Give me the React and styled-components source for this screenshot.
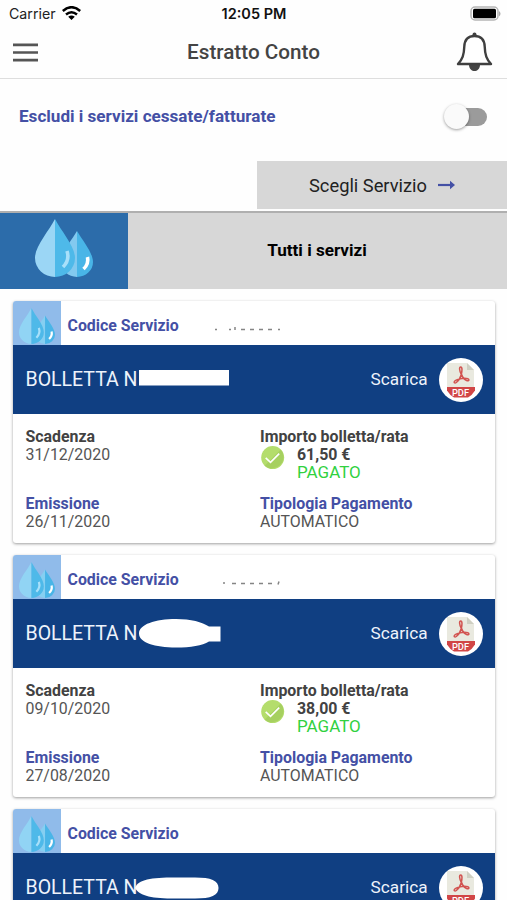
import React from "react";
import styled, { createGlobalStyle } from "styled-components";

const Global = createGlobalStyle`
  *{box-sizing:border-box}
  body{margin:0;background:#fff;overflow:hidden;font-family:Roboto,"Liberation Sans",sans-serif;color:#424242}
  svg{display:block;flex:none}
`;
const Screen = styled.div`width:507px;height:900px;overflow:hidden;background:#fefefe;`;
const StatusBar = styled.div`
  height:28px;display:grid;grid-template-columns:1fr auto 1fr;align-items:center;
  padding:0 6px 0 9px;font-family:Inter,sans-serif;font-size:14.2px;color:#222;
`;
const Carrier = styled.div`display:flex;align-items:center;gap:6px;padding-bottom:1px;`;
const Clock = styled.div`font-weight:600;font-size:14.500px;color:#111;margin-left:-2px;padding-bottom:1px;`;
const Battery = styled.div`justify-self:end;padding-bottom:1px;`;
const NavBar = styled.header`
  height:51px;display:grid;grid-template-columns:45px 1fr 45px;align-items:center;
  padding:0 10px 0 13px;border-bottom:1px solid #dedede;
`;
const Title = styled.h1`
  margin:-3px 3px 0 0;text-align:center;font-size:20.700px;font-weight:500;color:#444;
`;
const BellBox = styled.div`justify-self:end;margin:-3px 4px 0 0;`;
const FilterRow = styled.div`
  height:82px;display:flex;justify-content:space-between;align-items:flex-start;padding:27px 18px 0 19px;
`;
const FilterLabel = styled.div`
  font-size:17.100px;font-weight:700;line-height:21px;color:#4450a5;
`;
const Track = styled.div`
  width:37px;height:18px;margin:1.5px 2px 0 0;border-radius:9px;background:#9b9b9b;display:flex;align-items:center;
`;
const Knob = styled.div`
  width:25px;height:25px;flex:none;margin-left:-6px;border-radius:50%;background:#fafafa;
  box-shadow:0 1px 3px rgba(0,0,0,.38);
`;
const ChooseButton = styled.button`
  width:250px;height:48px;margin:0 0 2px auto;border:0;background:#d7d7d7;color:#222;
  display:flex;align-items:center;justify-content:center;gap:11px;
  font:400 18.300px Roboto,sans-serif;padding:0;
`;
const ServiceBand = styled.div`
  height:78px;display:flex;border-top:2px solid #afafaf;background:#d7d7d7;
`;
const ServiceIcon = styled.div`
  width:128px;background:#2c6caa;display:flex;align-items:center;justify-content:center;padding-bottom:7px;
`;
const ServiceName = styled.div`
  flex:1;display:flex;align-items:center;justify-content:center;font-size:17.100px;font-weight:700;color:#000;
  padding:0 1px 2px 0;
`;
const List = styled.main`display:flex;flex-direction:column;gap:12px;padding:12px 12px 0 13px;`;
const Card = styled.article`
  height:242px;flex:none;border-radius:3px;background:#fff;overflow:hidden;
  box-shadow:0 1px 3px rgba(0,0,0,.38);
`;
const CardHead = styled.div`height:44.400px;display:flex;align-items:center;color:#4450a5;`;
const Tile = styled.div`
  width:48px;height:43.500px;align-self:flex-start;background:#90bbea;
  display:flex;align-items:flex-end;justify-content:center;padding:0 0 1px 0;
`;
const HeadText = styled.div`
  width:146px;margin-left:6.5px;font-size:15.900px;font-weight:700;line-height:20px;padding-top:5px;
`;
const CodeMarks = styled.div`padding-top:12px;`;
const BillBar = styled.div`
  height:68.300px;background:#103f82;color:#eef3fb;display:flex;align-items:center;padding:0 12.500px 0 12.5px;
`;
const BillTitle = styled.div`font-size:19.500px;width:113px;white-space:nowrap;`;
const Download = styled.div`
  margin-left:auto;display:flex;align-items:center;gap:11px;font-size:17.200px;
`;
const DownloadText = styled.span`padding-bottom:2px;`;
const PdfCircle = styled.div`
  width:44px;height:44px;border-radius:50%;background:#fff;display:flex;align-items:center;justify-content:center;
`;
const Details = styled.div`
  display:grid;grid-template-columns:234.5px 1fr;row-gap:13px;padding:14.300px 12.5px;font-size:15.900px;line-height:18.2px;
`;
const Label = styled.div`font-weight:700;color:${p => (p.$blue ? "#4450a5" : "#424242")};`;
const Value = styled.div`color:#555;`;
const Payment = styled.div`display:flex;gap:12px;`;
const Amount = styled.div`font-weight:700;color:#424242;`;
const Paid = styled.div`color:#31d13f;font-size:17px;line-height:17.500px;`;

const Drops = ({ w, h, soft }) => (
  <svg width={w} height={h} viewBox="0 0 58 58" preserveAspectRatio="none">
    <path d="M42 12C36 22 26 34 26 43a16 15 0 0 0 16 15Z" fill={soft ? "#86cff1" : "#83c9ef"} />
    <path d="M42 12C48 22 58 34 58 43a16 15 0 0 1-16 15Z" fill="#49b5e7" />
    <path d="M20 0C14 12 0 27 0 39a20 19 0 0 0 20 19Z" fill={soft ? "#91d4f4" : "#9bd6f5"} />
    <path d="M20 0C26 12 40 27 40 39a20 19 0 0 1-20 19Z" fill="#4eb9e9" />
    <path d="M32 32q3 9-4 16" fill="none" stroke="#a8e0fa" strokeWidth="3.6" />
    <path d="M52.5 38q1.5 7-4 12" fill="none" stroke="#fff" strokeWidth="3.6" />
  </svg>
);
const Burger = () => (
  <svg width="25" height="20" viewBox="0 0 25 20" stroke="#555" strokeWidth="2.600">
    <path d="M0 1.900h25M0 9.500h25M0 17.100h25" />
  </svg>
);
const Wifi = () => (
  <svg width="19" height="15" viewBox="0 0 19 15" fill="none" stroke="#000" strokeWidth="2.5">
    <path d="M.8 5Q9.5-2.600 18.2 5M4 8.5q5.5-4.6 11 0" />
    <path d="m6.2 10.8 3.3 3.3 3.3-3.3q-3.3-2.5-6.6 0Z" fill="#000" stroke="none" />
  </svg>
);
const Bell = () => (
  <svg width="37" height="40" viewBox="0 0 37 40">
    <path d="M13 33h11c-.5 8-10.5 8-11 0Z" fill="#444" />
    <path d="M18.5 4C12 4 8.600 8 8.300 14.500 8 23 6.500 27 2 32h33C30.500 27 29 23 28.700 14.500 28.400 8 25 4 18.500 4Z" fill="#fff" stroke="#3f3f3f" strokeWidth="2.400" strokeLinejoin="round" />
    <circle cx="18.500" cy="2.500" r="2" fill="#3f3f3f" />
  </svg>
);
const Pdf = () => (
  <svg width="30" height="36" viewBox="0 0 30 36">
    <path d="M1 1h20l7 7v18H1Z" fill="#e9e9df" />
    <path d="m21 1 7 7h-7Z" fill="#cfcfc2" />
    <path d="M1 25h28v3.500q-3 5-7 7H8q-4-2-7-7Z" fill="#d14646" />
    <path d="M15.300 12.500c-2-4-2.300-7.500-.6-7.500s1.500 3.500.6 7.500m0 0c-1 3.500-3 6.500-5 8-1.500 1-3 0-1.500-1.500 1.500-1.300 4.500-2.200 8.500-2.700m-1.700-3.800c1.200 3.500 3.200 5.500 5.500 6.200 2 .6 2.500-1.200.7-1.900-1.500-.6-3.200-.7-5.500-.4" fill="none" stroke="#d25350" strokeWidth="1.500" strokeLinejoin="round" />
    <text x="14.500" y="33.500" textAnchor="middle" fill="#fff" fontFamily="Roboto, sans-serif" fontSize="9.300" fontWeight="500">PDF</text>
  </svg>
);
const Check = () => (
  <svg width="25" height="25" viewBox="0 0 25 25">
    <circle cx="12.700" cy="11.600" r="11.500" fill="#b4dd6c" />
    <path d="M20.800 3.500A11.500 11.500 0 0 1 4.600 19.700Z" fill="#a6d060" />
    <path d="m5.700 11.800 4.800 4.500 8.700-8.700" fill="none" stroke="#fff" strokeWidth="1.600" />
  </svg>
);
const Arrow = () => (
  <svg width="17" height="10" viewBox="0 0 17 10" fill="none" stroke="#4450a5" strokeWidth="2.200">
    <path d="M0 5h14" />
    <path d="m12 .800 5 4.200-5 4.200Z" fill="#4450a5" stroke="none" />
  </svg>
);

const codeMarks = [
  "M201 3.500h2M215 3.500h2M221 1v3M227 3.500h4M236 3.500h4M245 3.500h4M254 3.500h4M264 3.500h2",
  "M209 3h2M218 3.500h4M227 3.500h4M236 3.500h4M245 3.500h4M254 3.500h4M265 1.500l-1 3",
  "",
];
const maskShapes = [
  "M0 5h90v15.500H0Z",
  "M0 14.500C0 5.500 16 0 37 0c15 0 26 3 33 7.500h11.500v15H70c-7 4-18 6-33 6C16 28.500 0 23.500 0 14.500Z",
  "M-4 15C-1 6.500 12 4.500 36 4.500h20c16 0 23.500 3 23.500 10.500S72 25.500 56 25.500H36C14 25.500 1 23.500-4 15Z",
];
const MaskSvg = styled.svg`overflow:visible;`;

const bills = [
  { due: "31/12/2020", amount: "61,50 €", issued: "26/11/2020" },
  { due: "09/10/2020", amount: "38,00 €", issued: "27/08/2020" },
  { due: "", amount: "", issued: "" },
];

const BillCard = ({ bill, index }) => (
  <Card>
    <CardHead>
      <Tile><Drops w={36} h={36} soft /></Tile>
      <HeadText>Codice Servizio</HeadText>
      <CodeMarks>
        <svg width="80" height="6" viewBox="200 0 80 6">
          <path d={codeMarks[index]} stroke="#858585" strokeWidth="1.500" fill="none" />
        </svg>
      </CodeMarks>
    </CardHead>
    <BillBar>
      <BillTitle>BOLLETTA N</BillTitle>
      <MaskSvg width="96" height="30" viewBox="0 0 96 30" fill="#fff">
        <path d={maskShapes[index]} />
      </MaskSvg>
      <Download><DownloadText>Scarica</DownloadText><PdfCircle><Pdf /></PdfCircle></Download>
    </BillBar>
    {bill.due && (
      <Details>
        <div><Label>Scadenza</Label><Value>{bill.due}</Value></div>
        <div>
          <Label>Importo bolletta/rata</Label>
          <Payment><Check /><div><Amount>{bill.amount}</Amount><Paid>PAGATO</Paid></div></Payment>
        </div>
        <div><Label $blue>Emissione</Label><Value>{bill.issued}</Value></div>
        <div><Label $blue>Tipologia Pagamento</Label><Value>AUTOMATICO</Value></div>
      </Details>
    )}
  </Card>
);

export default function App() {
  return (
    <Screen>
      <Global />
      <StatusBar>
        <Carrier>Carrier<Wifi /></Carrier>
        <Clock>12:05 PM</Clock>
        <Battery>
          <svg width="31" height="16" viewBox="0 0 31 16">
            <rect x="1" y="1" width="27" height="13" rx="4" fill="#fff" stroke="#b5b5b5" strokeWidth="1.500" />
            <rect x="3" y="2.800" width="23" height="9.400" rx="1.500" fill="#000" />
            <path d="M29 5q3 2.700 0 5.500Z" fill="#aaa" />
          </svg>
        </Battery>
      </StatusBar>
      <NavBar>
        <Burger />
        <Title>Estratto Conto</Title>
        <BellBox><Bell /></BellBox>
      </NavBar>
      <FilterRow>
        <FilterLabel>Escludi i servizi cessate/fatturate</FilterLabel>
        <Track><Knob /></Track>
      </FilterRow>
      <ChooseButton>Scegli Servizio<Arrow /></ChooseButton>
      <ServiceBand>
        <ServiceIcon><Drops w={58} h={58} /></ServiceIcon>
        <ServiceName>Tutti i servizi</ServiceName>
      </ServiceBand>
      <List>{bills.map((bill, i) => <BillCard key={i} bill={bill} index={i} />)}</List>
    </Screen>
  );
}
